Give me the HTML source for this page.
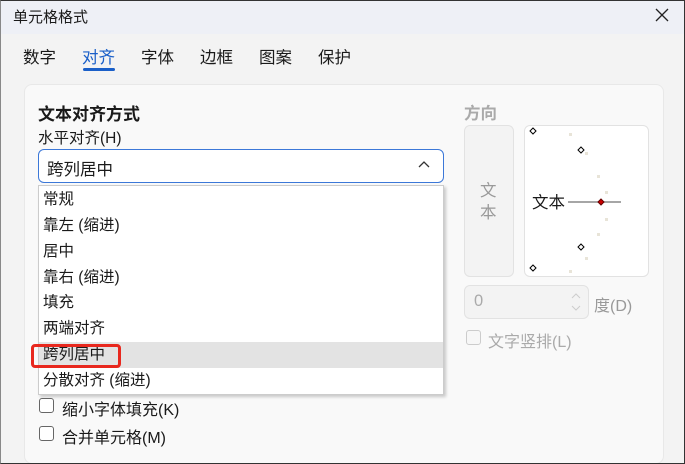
<!DOCTYPE html>
<html><head><meta charset="utf-8"><style>
*{margin:0;padding:0;box-sizing:border-box}
html,body{width:685px;height:464px;overflow:hidden}
body{background:#f3f3f3;font-family:"Liberation Sans","Noto Sans CJK SC",sans-serif;color:#1a1a1a;position:relative}
.a{position:absolute;white-space:nowrap}
#frame{position:absolute;left:0;top:0;width:685px;height:464px;border:1px solid #333;border-left-color:#888;pointer-events:none}
.title{position:absolute;left:0;top:0;width:685px;height:34px;background:#eef0f6}
.tab{font-size:16.5px;top:44px}
.panel{position:absolute;left:24px;top:84px;width:640px;height:380px;background:#f9f9f9;border:1px solid #e8e8e8;border-radius:8px}
.item{position:absolute;left:0;width:404px;height:26px;font-size:15.5px;line-height:26px;padding-left:4px}
.cb{position:absolute;width:15px;height:15px;border:1px solid #666;border-radius:3px;background:#fff}
</style></head><body>
<div class="title"></div>
<div class="a" style="left:13px;top:6px;font-size:15px">单元格格式</div>
<svg class="a" style="left:655px;top:8px" width="14" height="14"><path d="M1 1L13 13M13 1L1 13" stroke="#222" stroke-width="1.3"/></svg>
<div class="a tab" style="left:23px">数字</div>
<div class="a tab" style="left:82px;color:#1a5fc8">对齐</div>
<div class="a" style="left:83px;top:68px;width:32px;height:3px;background:#1a5fc8;border-radius:2px"></div>
<div class="a tab" style="left:141px">字体</div>
<div class="a tab" style="left:200px">边框</div>
<div class="a tab" style="left:259px">图案</div>
<div class="a tab" style="left:318px">保护</div>
<div class="panel"></div>
<div class="a" style="left:38px;top:100px;font-size:17px;font-weight:bold">文本对齐方式</div>
<div class="a" style="left:38px;top:126px;font-size:15.5px">水平对齐(H)</div>
<div class="a" style="left:38px;top:149px;width:406px;height:34px;border:1px solid #3c78d8;border-radius:6px;background:#fff"></div>
<div class="a" style="left:47px;top:156px;font-size:16.5px">跨列居中</div>
<svg class="a" style="left:418px;top:160px" width="12" height="8"><path d="M1 7L6 2L11 7" fill="none" stroke="#333" stroke-width="1.3"/></svg>
<div class="a" style="left:464px;top:100px;font-size:16.5px;font-weight:bold;color:#aaa">方向</div>
<div class="a" style="left:464px;top:125px;width:50px;height:152px;border:1px solid #e2e2e2;border-radius:6px;background:#f3f3f3"></div>
<div class="a" style="left:480px;top:180px;font-size:16.5px;color:#999;line-height:22px;width:17px;white-space:normal">文本</div>
<div class="a" style="left:524px;top:125px;width:125px;height:152px;border:1px solid #e2e2e2;border-radius:6px;background:#fff"></div>
<svg class="a" style="left:524px;top:125px" width="125" height="152">
<g fill="#e8e4d8"><rect x="45" y="8" width="3" height="3"/><rect x="61" y="27" width="3" height="3"/><rect x="73" y="50" width="3" height="3"/><rect x="81" y="66" width="3" height="3"/><rect x="81" y="93" width="3" height="3"/><rect x="73" y="108" width="3" height="3"/><rect x="61" y="132" width="3" height="3"/><rect x="45" y="145" width="3" height="3"/></g>
<line x1="44" y1="77" x2="97" y2="77" stroke="#888" stroke-width="1.5"/>
<g fill="#fff" stroke="#000" stroke-width="1"><path d="M9 3l3 3l-3 3l-3-3z"/><path d="M57 22l3 3l-3 3l-3-3z"/><path d="M57 119l3 3l-3 3l-3-3z"/><path d="M9 140l3 3l-3 3l-3-3z"/></g>
<path d="M77 74l3 3l-3 3l-3-3z" fill="#c00" stroke="#600"/>
</svg>
<div class="a" style="left:532px;top:189px;font-size:16.5px">文本</div>
<div class="a" style="left:464px;top:285px;width:125px;height:34px;border:1px solid #e2e2e2;border-radius:6px;background:#f3f3f3"></div>
<div class="a" style="left:474px;top:292px;font-size:16.5px;color:#aaa">0</div>
<svg class="a" style="left:570px;top:292px" width="12" height="20"><path d="M2 6l4-4l4 4M2 14l4 4l4-4" fill="none" stroke="#ccc"/></svg>
<div class="a" style="left:594px;top:292px;font-size:16px;color:#999">度(D)</div>
<div class="cb" style="left:466px;top:330px;border-color:#ccc;background:#f7f7f7"></div>
<div class="a" style="left:488px;top:328px;font-size:16px;color:#aaa">文字竖排(L)</div>
<div class="a" style="left:38px;top:185px;width:406px;height:210px;background:#fff;border:1px solid #ccc;box-shadow:2px 2px 3px rgba(0,0,0,.2)">
<div class="item" style="top:1px">常规</div>
<div class="item" style="top:27px">靠左 (缩进)</div>
<div class="item" style="top:53px">居中</div>
<div class="item" style="top:79px">靠右 (缩进)</div>
<div class="item" style="top:104px">填充</div>
<div class="item" style="top:130px">两端对齐</div>
<div class="item" style="top:156px;background:#e3e3e3">跨列居中</div>
<div class="item" style="top:182px">分散对齐 (缩进)</div>
</div>
<div class="a" style="left:31px;top:344px;width:90px;height:24px;border:3px solid #e8281e;border-radius:4px"></div>
<div class="cb" style="left:39px;top:398px"></div>
<div class="a" style="left:62px;top:396px;font-size:16px">缩小字体填充(K)</div>
<div class="cb" style="left:39px;top:426px"></div>
<div class="a" style="left:62px;top:424px;font-size:16px">合并单元格(M)</div>
<div id="frame"></div>
</body></html>
